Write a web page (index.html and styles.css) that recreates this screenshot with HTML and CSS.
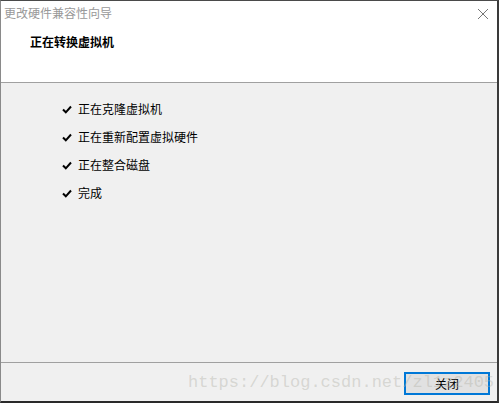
FILE: index.html
```html
<!DOCTYPE html>
<html lang="zh">
<head>
<meta charset="utf-8">
<title>更改硬件兼容性向导</title>
<link rel="stylesheet" href="styles.css">
</head>
<body>
<div class="window">
  <div class="titlebar">
    <span class="title">更改硬件兼容性向导</span>
    <svg class="close" width="12" height="12" viewBox="0 0 12 12"><path d="M1 1L11 11M11 1L1 11" stroke="#777" stroke-width="1"/></svg>
  </div>
  <div class="header">
    <h1 class="heading">正在转换虚拟机</h1>
  </div>
  <div class="content">
    <ul class="steps">
      <li class="step"><svg class="check" width="10" height="9" viewBox="0 0 10 9"><path d="M1 4.5L3.8 7.3L9 1.5" fill="none" stroke="#000" stroke-width="2"/></svg><span>正在克隆虚拟机</span></li>
      <li class="step"><svg class="check" width="10" height="9" viewBox="0 0 10 9"><path d="M1 4.5L3.8 7.3L9 1.5" fill="none" stroke="#000" stroke-width="2"/></svg><span>正在重新配置虚拟硬件</span></li>
      <li class="step"><svg class="check" width="10" height="9" viewBox="0 0 10 9"><path d="M1 4.5L3.8 7.3L9 1.5" fill="none" stroke="#000" stroke-width="2"/></svg><span>正在整合磁盘</span></li>
      <li class="step"><svg class="check" width="10" height="9" viewBox="0 0 10 9"><path d="M1 4.5L3.8 7.3L9 1.5" fill="none" stroke="#000" stroke-width="2"/></svg><span>完成</span></li>
    </ul>
  </div>
  <div class="footer">
    <button class="btn">关闭</button>
    <span class="watermark">https://blog.csdn.net/zl1z2405</span>
  </div>
</div>
</body>
</html>
```
FILE: styles.css
```css
* { box-sizing: border-box; }
html, body { margin: 0; padding: 0; }
body {
  width: 499px;
  height: 403px;
  overflow: hidden;
  font-family: "Noto Sans CJK SC", "Liberation Sans", sans-serif;
  font-size: 12px;
  background: #f0f0f0;
}
.window {
  width: 499px;
  height: 403px;
  display: flex;
  flex-direction: column;
  border-top: 1px solid #4a4a4a;
  border-left: 1px solid #8a8a8a;
  border-right: 2px solid #3a3a3a;
  border-bottom: 2px solid #2a2a2a;
  background: #f0f0f0;
}
.titlebar {
  height: 24px;
  background: #fff;
  display: flex;
  align-items: center;
  justify-content: space-between;
  padding: 0 8px 0 3px;
}
.title {
  color: #999;
  font-size: 12px;
  line-height: 14px;
}
.close { display: block; margin-top: 2px; }
.header {
  height: 58px;
  background: #fff;
  border-bottom: 1px solid #a0a0a0;
  padding: 10px 0 0 29px;
}
.heading {
  margin: 0;
  font-size: 12px;
  font-weight: bold;
  line-height: 14px;
  color: #000;
}
.content {
  flex: 1;
  border-bottom: 1px solid #a0a0a0;
  padding: 19px 0 0 61px;
}
.steps {
  list-style: none;
  margin: 0;
  padding: 0;
  display: flex;
  flex-direction: column;
  gap: 14px;
}
.step {
  display: flex;
  align-items: center;
  height: 14px;
  line-height: 14px;
  color: #000;
}
.check { display: block; margin-right: 6px; }
.footer {
  position: relative;
  height: 38px;
  display: flex;
  justify-content: flex-end;
  align-items: flex-start;
  padding: 9px 7px 0 0;
}
.btn {
  width: 86px;
  height: 23px;
  border: 2px solid #0078d7;
  background: #e1e1e1;
  font-family: "Noto Sans CJK SC", sans-serif;
  font-size: 12px;
  color: #000;
  padding: 0;
  line-height: 17px;
}
.watermark {
  position: absolute;
  left: 187px;
  top: 9px;
  font-family: "Liberation Mono", monospace;
  font-size: 17px;
  line-height: 22px;
  color: rgba(175, 175, 165, 0.4);
  white-space: nowrap;
  pointer-events: none;
}
```
